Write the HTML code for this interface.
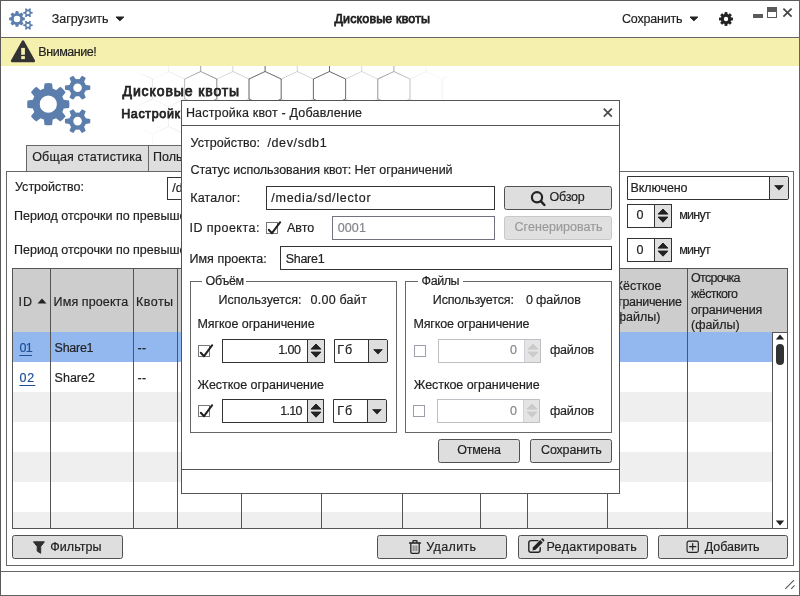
<!DOCTYPE html>
<html lang="ru"><head><meta charset="utf-8"><title>Дисковые квоты</title>
<style>
html,body{margin:0;padding:0;background:#fff}
body{width:800px;height:596px;overflow:hidden;position:relative;font:12.5px/16px "Liberation Sans",sans-serif;color:#222}
#win{position:absolute;left:0;top:0;width:800px;height:596px;will-change:transform}
#frame{left:0;top:0;width:800px;height:596px;box-sizing:border-box;border:1px solid #5a5a5a;border-bottom-color:#626262;border-right-color:#626262}
.abs,.t,#win div,#win svg{position:absolute}
.t{white-space:pre;-webkit-text-stroke:0.18px}
#titlebar{left:0;top:0;width:800px;height:37px;border-bottom:1px solid #666}
#warn{left:1px;top:38px;width:798px;height:28px;background:#f5f0ae}
.tab{background:#dedede;border:1px solid #666;box-sizing:border-box}
.panel{background:#fff;border:1px solid #666;box-sizing:border-box}
.inp{background:#fff;border:1px solid #333;box-sizing:border-box}
.inp.lt{border-color:#72727e}
.combo{border-radius:0 2px 2px 0}
.combo i{right:0;top:0;bottom:0;width:18px;background:#dedede;border-left:1px solid #333;border-radius:0 2px 2px 0;position:absolute}
.spin i{top:0;bottom:0;right:0;background:#dedede;border-left:1px solid #333;position:absolute}
.spin.dis{border-color:#bfbfc6}
.spin.dis i{border-left-color:#d0d0d8;background:#e4e4e4}
.btn{background:#dedede;border:1px solid #505050;border-radius:2.5px;box-sizing:border-box}
.btn.dis{border-color:#c8c8c8;background:#e0e0e0}
.tbl{border:1px solid #555;box-sizing:border-box;background:#fff}
.fs{border:1px solid #666;box-sizing:border-box}
#dlg{left:181px;top:100px;width:439px;height:394px;box-sizing:border-box;border:1px solid #555;background:#fff}
</style></head>
<body><div id="win">
<div id="titlebar">
<svg class="abs" style="left:9px;top:8px" width="24.0" height="22.1" viewBox="0 0 64 59"><path fill="#5b7eac" fill-rule="evenodd" d="M25.72 44.58L25.08 49.96A21.10 21.10 0 0 1 17.52 49.96L16.88 44.58A16.00 16.00 0 0 1 13.55 43.20L9.29 46.55A21.10 21.10 0 0 1 3.95 41.21L7.30 36.95A16.00 16.00 0 0 1 5.92 33.62L0.54 32.98A21.10 21.10 0 0 1 0.54 25.42L5.92 24.78A16.00 16.00 0 0 1 7.30 21.45L3.95 17.19A21.10 21.10 0 0 1 9.29 11.85L13.55 15.20A16.00 16.00 0 0 1 16.88 13.82L17.52 8.44A21.10 21.10 0 0 1 25.08 8.44L25.72 13.82A16.00 16.00 0 0 1 29.05 15.20L33.31 11.85A21.10 21.10 0 0 1 38.65 17.19L35.30 21.45A16.00 16.00 0 0 1 36.68 24.78L42.06 25.42A21.10 21.10 0 0 1 42.06 32.98L36.68 33.62A16.00 16.00 0 0 1 35.30 36.95L38.65 41.21A21.10 21.10 0 0 1 33.31 46.55L29.05 43.20A16.00 16.00 0 0 1 25.72 44.58ZM29.90 29.20A8.60 8.60 0 1 0 12.70 29.20A8.60 8.60 0 1 0 29.90 29.20ZM58.74 9.91L63.12 10.55A12.70 12.70 0 0 1 63.12 14.85L58.74 15.49A8.60 8.60 0 0 1 57.08 18.35L58.72 22.47A12.70 12.70 0 0 1 55.00 24.61L52.25 21.14A8.60 8.60 0 0 1 48.95 21.14L46.20 24.61A12.70 12.70 0 0 1 42.48 22.47L44.12 18.35A8.60 8.60 0 0 1 42.46 15.49L38.08 14.85A12.70 12.70 0 0 1 38.08 10.55L42.46 9.91A8.60 8.60 0 0 1 44.12 7.05L42.48 2.93A12.70 12.70 0 0 1 46.20 0.79L48.95 4.26A8.60 8.60 0 0 1 52.25 4.26L55.00 0.79A12.70 12.70 0 0 1 58.72 2.93L57.08 7.05A8.60 8.60 0 0 1 58.74 9.91ZM54.90 12.70A4.30 4.30 0 1 0 46.30 12.70A4.30 4.30 0 1 0 54.90 12.70ZM58.74 43.31L63.12 43.95A12.70 12.70 0 0 1 63.12 48.25L58.74 48.89A8.60 8.60 0 0 1 57.08 51.75L58.72 55.87A12.70 12.70 0 0 1 55.00 58.01L52.25 54.54A8.60 8.60 0 0 1 48.95 54.54L46.20 58.01A12.70 12.70 0 0 1 42.48 55.87L44.12 51.75A8.60 8.60 0 0 1 42.46 48.89L38.08 48.25A12.70 12.70 0 0 1 38.08 43.95L42.46 43.31A8.60 8.60 0 0 1 44.12 40.45L42.48 36.33A12.70 12.70 0 0 1 46.20 34.19L48.95 37.66A8.60 8.60 0 0 1 52.25 37.66L55.00 34.19A12.70 12.70 0 0 1 58.72 36.33L57.08 40.45A8.60 8.60 0 0 1 58.74 43.31ZM54.90 46.10A4.30 4.30 0 1 0 46.30 46.10A4.30 4.30 0 1 0 54.90 46.10Z"/></svg>
<span class="t" style="left:51.80px;top:11.00px;letter-spacing:-0.045px;">Загрузить</span>
<svg class="abs" style="left:114.5px;top:15.6px" width="10" height="6" viewBox="0 0 10 6"><path d="M1 1H8.8L4.9 4.8Z" fill="#222" stroke="#222" stroke-width="1" stroke-linejoin="round"/></svg>
<span class="t" style="left:334.50px;top:11.00px;letter-spacing:0.140px;-webkit-text-stroke:0.75px;">Дисковые квоты</span>
<span class="t" style="left:622.00px;top:11.00px;letter-spacing:-0.200px;">Сохранить</span>
<svg class="abs" style="left:689px;top:15.6px" width="10" height="6" viewBox="0 0 10 6"><path d="M1 1H8.8L4.9 4.8Z" fill="#222" stroke="#222" stroke-width="1" stroke-linejoin="round"/></svg>
<svg class="abs" style="left:718.9px;top:11.9px" width="14" height="14" viewBox="0 0 14 14"><path fill="#222" fill-rule="evenodd" d="M8.54 11.97L8.39 13.86A7.00 7.00 0 0 1 5.61 13.86L5.46 11.97A5.20 5.20 0 0 1 4.57 11.60L3.13 12.83A7.00 7.00 0 0 1 1.17 10.87L2.40 9.43A5.20 5.20 0 0 1 2.03 8.54L0.14 8.39A7.00 7.00 0 0 1 0.14 5.61L2.03 5.46A5.20 5.20 0 0 1 2.40 4.57L1.17 3.13A7.00 7.00 0 0 1 3.13 1.17L4.57 2.40A5.20 5.20 0 0 1 5.46 2.03L5.61 0.14A7.00 7.00 0 0 1 8.39 0.14L8.54 2.03A5.20 5.20 0 0 1 9.43 2.40L10.87 1.17A7.00 7.00 0 0 1 12.83 3.13L11.60 4.57A5.20 5.20 0 0 1 11.97 5.46L13.86 5.61A7.00 7.00 0 0 1 13.86 8.39L11.97 8.54A5.20 5.20 0 0 1 11.60 9.43L12.83 10.87A7.00 7.00 0 0 1 10.87 12.83L9.43 11.60A5.20 5.20 0 0 1 8.54 11.97ZM9.20 7.00A2.20 2.20 0 1 0 4.80 7.00A2.20 2.20 0 1 0 9.20 7.00Z"/></svg>
<div class="abs" style="left:753px;top:14px;width:10px;height:4px;background:#5a5a5a"></div>
<div class="abs" style="left:767px;top:7px;width:10px;height:11px;border:1px solid #5a5a5a;border-top-width:5px;box-sizing:border-box"></div>
<svg class="abs" style="left:782px;top:7px" width="11" height="11" viewBox="0 0 11 11"><path d="M1.4 1.6L9.6 9.6M9.6 1.6L1.4 9.6" stroke="#444" stroke-width="1.7" fill="none"/></svg>
</div>
<div id="warn">
<svg class="abs" style="left:9px;top:1px" width="26" height="24" viewBox="0 0 26 24"><path d="M13 2.6L23.8 22H2.2Z" fill="#333" stroke="#333" stroke-width="2.6" stroke-linejoin="round"/><rect x="11.2" y="8.9" width="3.7" height="6.9" fill="#f5f0ae"/><rect x="11.2" y="17.1" width="3.7" height="3" fill="#f5f0ae"/></svg>
</div>
<span class="t" style="left:38.30px;top:44.00px;letter-spacing:-0.451px;">Внимание!</span>
<svg class="abs" style="left:0;top:66px" width="800" height="80" viewBox="0 66 800 80"><defs><linearGradient id="hg" x1="0" x2="1" y1="0" y2="0"><stop offset="0.17" stop-color="#fff" stop-opacity="0"/><stop offset="0.3" stop-color="#fff" stop-opacity="1"/><stop offset="0.43" stop-color="#fff" stop-opacity="1"/><stop offset="0.565" stop-color="#fff" stop-opacity="0"/></linearGradient><mask id="hm"><rect x="0" y="66" width="800" height="80" fill="url(#hg)"/></mask></defs><g mask="url(#hm)" fill="none"><path d="M-24.7 51.5L-8.6 44.0L7.5 51.5L7.5 71.5M7.5 51.5L23.6 44.0L39.7 51.5L39.7 71.5M39.7 51.5L55.8 44.0L71.9 51.5L71.9 71.5M71.9 51.5L88.0 44.0L104.1 51.5L104.1 71.5M104.1 51.5L120.2 44.0L136.3 51.5L136.3 71.5M136.3 51.5L152.4 44.0L168.5 51.5L168.5 71.5M168.5 51.5L184.6 44.0L200.7 51.5L200.7 71.5M200.7 51.5L216.8 44.0L232.9 51.5L232.9 71.5M232.9 51.5L249.0 44.0L265.1 51.5L265.1 71.5M265.1 51.5L281.2 44.0L297.3 51.5L297.3 71.5M297.3 51.5L313.4 44.0L329.5 51.5L329.5 71.5M329.5 51.5L345.6 44.0L361.7 51.5L361.7 71.5M361.7 51.5L377.8 44.0L393.9 51.5L393.9 71.5M393.9 51.5L410.0 44.0L426.1 51.5L426.1 71.5M426.1 51.5L442.2 44.0L458.3 51.5L458.3 71.5M458.3 51.5L474.4 44.0L490.5 51.5L490.5 71.5M490.5 51.5L506.6 44.0L522.7 51.5L522.7 71.5M522.7 51.5L538.8 44.0L554.9 51.5L554.9 71.5M554.9 51.5L571.0 44.0L587.1 51.5L587.1 71.5M587.1 51.5L603.2 44.0L619.3 51.5L619.3 71.5M619.3 51.5L635.4 44.0L651.5 51.5L651.5 71.5M651.5 51.5L667.6 44.0L683.7 51.5L683.7 71.5M683.7 51.5L699.8 44.0L715.9 51.5L715.9 71.5M715.9 51.5L732.0 44.0L748.1 51.5L748.1 71.5M748.1 51.5L764.2 44.0L780.3 51.5L780.3 71.5M780.3 51.5L796.4 44.0L812.5 51.5L812.5 71.5M812.5 51.5L828.6 44.0L844.7 51.5L844.7 71.5M844.7 51.5L860.8 44.0L876.9 51.5L876.9 71.5M-40.8 79.0L-24.7 71.5L-8.6 79.0L-8.6 99.0M-8.6 79.0L7.5 71.5L23.6 79.0L23.6 99.0M23.6 79.0L39.7 71.5L55.8 79.0L55.8 99.0M55.8 79.0L71.9 71.5L88.0 79.0L88.0 99.0M88.0 79.0L104.1 71.5L120.2 79.0L120.2 99.0M120.2 79.0L136.3 71.5L152.4 79.0L152.4 99.0M152.4 79.0L168.5 71.5L184.6 79.0L184.6 99.0M184.6 79.0L200.7 71.5L216.8 79.0L216.8 99.0M216.8 79.0L232.9 71.5L249.0 79.0L249.0 99.0M249.0 79.0L265.1 71.5L281.2 79.0L281.2 99.0M281.2 79.0L297.3 71.5L313.4 79.0L313.4 99.0M313.4 79.0L329.5 71.5L345.6 79.0L345.6 99.0M345.6 79.0L361.7 71.5L377.8 79.0L377.8 99.0M377.8 79.0L393.9 71.5L410.0 79.0L410.0 99.0M410.0 79.0L426.1 71.5L442.2 79.0L442.2 99.0M442.2 79.0L458.3 71.5L474.4 79.0L474.4 99.0M474.4 79.0L490.5 71.5L506.6 79.0L506.6 99.0M506.6 79.0L522.7 71.5L538.8 79.0L538.8 99.0M538.8 79.0L554.9 71.5L571.0 79.0L571.0 99.0M571.0 79.0L587.1 71.5L603.2 79.0L603.2 99.0M603.2 79.0L619.3 71.5L635.4 79.0L635.4 99.0M635.4 79.0L651.5 71.5L667.6 79.0L667.6 99.0M667.6 79.0L683.7 71.5L699.8 79.0L699.8 99.0M699.8 79.0L715.9 71.5L732.0 79.0L732.0 99.0M732.0 79.0L748.1 71.5L764.2 79.0L764.2 99.0M764.2 79.0L780.3 71.5L796.4 79.0L796.4 99.0M796.4 79.0L812.5 71.5L828.6 79.0L828.6 99.0M828.6 79.0L844.7 71.5L860.8 79.0L860.8 99.0M-24.7 106.5L-8.6 99.0L7.5 106.5L7.5 126.5M7.5 106.5L23.6 99.0L39.7 106.5L39.7 126.5M39.7 106.5L55.8 99.0L71.9 106.5L71.9 126.5M71.9 106.5L88.0 99.0L104.1 106.5L104.1 126.5M104.1 106.5L120.2 99.0L136.3 106.5L136.3 126.5M136.3 106.5L152.4 99.0L168.5 106.5L168.5 126.5M168.5 106.5L184.6 99.0L200.7 106.5L200.7 126.5M200.7 106.5L216.8 99.0L232.9 106.5L232.9 126.5M232.9 106.5L249.0 99.0L265.1 106.5L265.1 126.5M265.1 106.5L281.2 99.0L297.3 106.5L297.3 126.5M297.3 106.5L313.4 99.0L329.5 106.5L329.5 126.5M329.5 106.5L345.6 99.0L361.7 106.5L361.7 126.5M361.7 106.5L377.8 99.0L393.9 106.5L393.9 126.5M393.9 106.5L410.0 99.0L426.1 106.5L426.1 126.5M426.1 106.5L442.2 99.0L458.3 106.5L458.3 126.5M458.3 106.5L474.4 99.0L490.5 106.5L490.5 126.5M490.5 106.5L506.6 99.0L522.7 106.5L522.7 126.5M522.7 106.5L538.8 99.0L554.9 106.5L554.9 126.5M554.9 106.5L571.0 99.0L587.1 106.5L587.1 126.5M587.1 106.5L603.2 99.0L619.3 106.5L619.3 126.5M619.3 106.5L635.4 99.0L651.5 106.5L651.5 126.5M651.5 106.5L667.6 99.0L683.7 106.5L683.7 126.5M683.7 106.5L699.8 99.0L715.9 106.5L715.9 126.5M715.9 106.5L732.0 99.0L748.1 106.5L748.1 126.5M748.1 106.5L764.2 99.0L780.3 106.5L780.3 126.5M780.3 106.5L796.4 99.0L812.5 106.5L812.5 126.5M812.5 106.5L828.6 99.0L844.7 106.5L844.7 126.5M844.7 106.5L860.8 99.0L876.9 106.5L876.9 126.5M-40.8 134.0L-24.7 126.5L-8.6 134.0L-8.6 154.0M-8.6 134.0L7.5 126.5L23.6 134.0L23.6 154.0M23.6 134.0L39.7 126.5L55.8 134.0L55.8 154.0M55.8 134.0L71.9 126.5L88.0 134.0L88.0 154.0M88.0 134.0L104.1 126.5L120.2 134.0L120.2 154.0M120.2 134.0L136.3 126.5L152.4 134.0L152.4 154.0M152.4 134.0L168.5 126.5L184.6 134.0L184.6 154.0M184.6 134.0L200.7 126.5L216.8 134.0L216.8 154.0M216.8 134.0L232.9 126.5L249.0 134.0L249.0 154.0M249.0 134.0L265.1 126.5L281.2 134.0L281.2 154.0M281.2 134.0L297.3 126.5L313.4 134.0L313.4 154.0M313.4 134.0L329.5 126.5L345.6 134.0L345.6 154.0M345.6 134.0L361.7 126.5L377.8 134.0L377.8 154.0M377.8 134.0L393.9 126.5L410.0 134.0L410.0 154.0M410.0 134.0L426.1 126.5L442.2 134.0L442.2 154.0M442.2 134.0L458.3 126.5L474.4 134.0L474.4 154.0M474.4 134.0L490.5 126.5L506.6 134.0L506.6 154.0M506.6 134.0L522.7 126.5L538.8 134.0L538.8 154.0M538.8 134.0L554.9 126.5L571.0 134.0L571.0 154.0M571.0 134.0L587.1 126.5L603.2 134.0L603.2 154.0M603.2 134.0L619.3 126.5L635.4 134.0L635.4 154.0M635.4 134.0L651.5 126.5L667.6 134.0L667.6 154.0M667.6 134.0L683.7 126.5L699.8 134.0L699.8 154.0M699.8 134.0L715.9 126.5L732.0 134.0L732.0 154.0M732.0 134.0L748.1 126.5L764.2 134.0L764.2 154.0M764.2 134.0L780.3 126.5L796.4 134.0L796.4 154.0M796.4 134.0L812.5 126.5L828.6 134.0L828.6 154.0M828.6 134.0L844.7 126.5L860.8 134.0L860.8 154.0" stroke="#555" stroke-width="0.6" opacity="0.45"/><path d="M7.5 51.5V71.5M7.5 71.5L23.6 79.0L23.6 99.0L7.5 106.5L-8.6 99.0L-8.6 79.0ZM71.9 51.5V71.5M71.9 71.5L88.0 79.0L88.0 99.0L71.9 106.5L55.8 99.0L55.8 79.0ZM136.3 51.5V71.5M136.3 71.5L152.4 79.0L152.4 99.0L136.3 106.5L120.2 99.0L120.2 79.0ZM200.7 51.5V71.5M200.7 71.5L216.8 79.0L216.8 99.0L200.7 106.5L184.6 99.0L184.6 79.0ZM265.1 51.5V71.5M265.1 71.5L281.2 79.0L281.2 99.0L265.1 106.5L249.0 99.0L249.0 79.0ZM329.5 51.5V71.5M329.5 71.5L345.6 79.0L345.6 99.0L329.5 106.5L313.4 99.0L313.4 79.0ZM393.9 51.5V71.5M393.9 71.5L410.0 79.0L410.0 99.0L393.9 106.5L377.8 99.0L377.8 79.0ZM458.3 51.5V71.5M458.3 71.5L474.4 79.0L474.4 99.0L458.3 106.5L442.2 99.0L442.2 79.0ZM522.7 51.5V71.5M522.7 71.5L538.8 79.0L538.8 99.0L522.7 106.5L506.6 99.0L506.6 79.0ZM587.1 51.5V71.5M587.1 71.5L603.2 79.0L603.2 99.0L587.1 106.5L571.0 99.0L571.0 79.0ZM651.5 51.5V71.5M651.5 71.5L667.6 79.0L667.6 99.0L651.5 106.5L635.4 99.0L635.4 79.0ZM715.9 51.5V71.5M715.9 71.5L732.0 79.0L732.0 99.0L715.9 106.5L699.8 99.0L699.8 79.0ZM780.3 51.5V71.5M780.3 71.5L796.4 79.0L796.4 99.0L780.3 106.5L764.2 99.0L764.2 79.0ZM844.7 51.5V71.5M844.7 71.5L860.8 79.0L860.8 99.0L844.7 106.5L828.6 99.0L828.6 79.0Z" stroke="#222" stroke-width="0.7" opacity="0.8"/></g></svg>
<svg class="abs" style="left:27px;top:75px" width="64.0" height="59.0" viewBox="0 0 64 59"><path fill="#5b7eac" fill-rule="evenodd" d="M25.72 44.58L25.08 49.96A21.10 21.10 0 0 1 17.52 49.96L16.88 44.58A16.00 16.00 0 0 1 13.55 43.20L9.29 46.55A21.10 21.10 0 0 1 3.95 41.21L7.30 36.95A16.00 16.00 0 0 1 5.92 33.62L0.54 32.98A21.10 21.10 0 0 1 0.54 25.42L5.92 24.78A16.00 16.00 0 0 1 7.30 21.45L3.95 17.19A21.10 21.10 0 0 1 9.29 11.85L13.55 15.20A16.00 16.00 0 0 1 16.88 13.82L17.52 8.44A21.10 21.10 0 0 1 25.08 8.44L25.72 13.82A16.00 16.00 0 0 1 29.05 15.20L33.31 11.85A21.10 21.10 0 0 1 38.65 17.19L35.30 21.45A16.00 16.00 0 0 1 36.68 24.78L42.06 25.42A21.10 21.10 0 0 1 42.06 32.98L36.68 33.62A16.00 16.00 0 0 1 35.30 36.95L38.65 41.21A21.10 21.10 0 0 1 33.31 46.55L29.05 43.20A16.00 16.00 0 0 1 25.72 44.58ZM29.90 29.20A8.60 8.60 0 1 0 12.70 29.20A8.60 8.60 0 1 0 29.90 29.20ZM58.74 9.91L63.12 10.55A12.70 12.70 0 0 1 63.12 14.85L58.74 15.49A8.60 8.60 0 0 1 57.08 18.35L58.72 22.47A12.70 12.70 0 0 1 55.00 24.61L52.25 21.14A8.60 8.60 0 0 1 48.95 21.14L46.20 24.61A12.70 12.70 0 0 1 42.48 22.47L44.12 18.35A8.60 8.60 0 0 1 42.46 15.49L38.08 14.85A12.70 12.70 0 0 1 38.08 10.55L42.46 9.91A8.60 8.60 0 0 1 44.12 7.05L42.48 2.93A12.70 12.70 0 0 1 46.20 0.79L48.95 4.26A8.60 8.60 0 0 1 52.25 4.26L55.00 0.79A12.70 12.70 0 0 1 58.72 2.93L57.08 7.05A8.60 8.60 0 0 1 58.74 9.91ZM54.90 12.70A4.30 4.30 0 1 0 46.30 12.70A4.30 4.30 0 1 0 54.90 12.70ZM58.74 43.31L63.12 43.95A12.70 12.70 0 0 1 63.12 48.25L58.74 48.89A8.60 8.60 0 0 1 57.08 51.75L58.72 55.87A12.70 12.70 0 0 1 55.00 58.01L52.25 54.54A8.60 8.60 0 0 1 48.95 54.54L46.20 58.01A12.70 12.70 0 0 1 42.48 55.87L44.12 51.75A8.60 8.60 0 0 1 42.46 48.89L38.08 48.25A12.70 12.70 0 0 1 38.08 43.95L42.46 43.31A8.60 8.60 0 0 1 44.12 40.45L42.48 36.33A12.70 12.70 0 0 1 46.20 34.19L48.95 37.66A8.60 8.60 0 0 1 52.25 37.66L55.00 34.19A12.70 12.70 0 0 1 58.72 36.33L57.08 40.45A8.60 8.60 0 0 1 58.74 43.31ZM54.90 46.10A4.30 4.30 0 1 0 46.30 46.10A4.30 4.30 0 1 0 54.90 46.10Z"/></svg>
<span class="t" style="left:122.50px;top:81.00px;letter-spacing:0.904px;font-size:14px;line-height:20px;-webkit-text-stroke:0.75px;">Дисковые квоты</span>
<span class="t" style="left:121.20px;top:106.00px;letter-spacing:0.651px;-webkit-text-stroke:0.75px;">Настройка квот проектов</span>
<div class="abs tab" style="left:26px;top:145px;width:123px;height:27px;"></div>
<div class="abs tab" style="left:148px;top:145px;width:114px;height:27px;"></div>
<span class="t" style="left:32.20px;top:149.00px;letter-spacing:0.175px;">Общая статистика</span>
<span class="t" style="left:153.00px;top:149.00px;">Пользователи</span>
<div class="abs panel" style="left:6px;top:171px;width:788px;height:395px;"></div>
<span class="t" style="left:15.00px;top:179.00px;letter-spacing:0.011px;">Устройство:</span>
<div class="abs inp" style="left:167px;top:177px;width:163px;height:23px;"></div>
<span class="t" style="left:172.30px;top:180.00px;">/dev/sdb1</span>
<span class="t" style="left:14.00px;top:208.00px;">Период отсрочки по превышению мягкого ограничения (объём):</span>
<span class="t" style="left:14.00px;top:242.00px;">Период отсрочки по превышению мягкого ограничения (файлы):</span>
<div class="abs inp combo" style="left:627px;top:176px;width:162px;height:24px;"><i></i></div>
<span class="t" style="left:630.60px;top:180.00px;letter-spacing:-0.101px;">Включено</span>
<svg class="abs" style="left:774px;top:185px" width="10" height="6" viewBox="0 0 10 6"><path d="M0.7 0.6H9.3L5 5.1Z" fill="#222" stroke="#222" stroke-width="0.8" stroke-linejoin="round"/></svg>
<div class="abs inp spin" style="left:627px;top:204px;width:45px;height:24px;"><i style="left:26px"></i></div><svg class="abs" style="left:657.1px;top:208.4px" width="12" height="16" viewBox="0 0 12 16"><path d="M1.1 6.1L6 1L10.9 6.1ZM1.1 9.1L6 14.2L10.9 9.1Z" fill="#222" stroke="#222" stroke-width="1" stroke-linejoin="round"/></svg>
<span class="t" style="left:636.50px;top:207.00px;">0</span>
<span class="t" style="left:679.20px;top:207.00px;letter-spacing:-0.700px;">минут</span>
<div class="abs inp spin" style="left:627px;top:238px;width:45px;height:24px;"><i style="left:26px"></i></div><svg class="abs" style="left:657.1px;top:242.4px" width="12" height="16" viewBox="0 0 12 16"><path d="M1.1 6.1L6 1L10.9 6.1ZM1.1 9.1L6 14.2L10.9 9.1Z" fill="#222" stroke="#222" stroke-width="1" stroke-linejoin="round"/></svg>
<span class="t" style="left:636.50px;top:242.00px;">0</span>
<span class="t" style="left:679.20px;top:242.00px;letter-spacing:-0.700px;">минут</span>
<div class="abs tbl" style="left:12px;top:268px;width:776px;height:261px;"></div>
<div class="abs" style="left:13px;top:269px;width:774px;height:63px;background:#cdcdcd"></div>
<div class="abs" style="left:13px;top:332px;width:759px;height:30px;background:#93b8f0"></div>
<div class="abs" style="left:13px;top:392px;width:759px;height:30px;background:#efefef"></div>
<div class="abs" style="left:13px;top:452px;width:759px;height:30px;background:#efefef"></div>
<div class="abs" style="left:13px;top:512px;width:759px;height:16px;background:#efefef"></div>
<div class="abs" style="left:50px;top:268px;width:1px;height:261px;background:#555"></div>
<div class="abs" style="left:133px;top:268px;width:1px;height:261px;background:#555"></div>
<div class="abs" style="left:177px;top:268px;width:1px;height:261px;background:#555"></div>
<div class="abs" style="left:241px;top:268px;width:1px;height:261px;background:#555"></div>
<div class="abs" style="left:321px;top:268px;width:1px;height:261px;background:#555"></div>
<div class="abs" style="left:402px;top:268px;width:1px;height:261px;background:#555"></div>
<div class="abs" style="left:480px;top:268px;width:1px;height:261px;background:#555"></div>
<div class="abs" style="left:527px;top:268px;width:1px;height:261px;background:#555"></div>
<div class="abs" style="left:607px;top:268px;width:1px;height:261px;background:#555"></div>
<div class="abs" style="left:687px;top:268px;width:1px;height:261px;background:#555"></div>
<div class="abs" style="left:772px;top:332px;width:16px;height:197px;border:1px solid #555;background:#fff;box-sizing:border-box"></div>
<svg class="abs" style="left:775px;top:334px" width="10" height="6" viewBox="0 0 10 6"><path d="M0.8 5.4H9.2L5 0.6Z" fill="#222"/></svg>
<svg class="abs" style="left:775px;top:520.3px" width="10" height="6" viewBox="0 0 10 6"><path d="M0.8 0.6H9.2L5 5.4Z" fill="#222"/></svg>
<div class="abs" style="left:776px;top:344px;width:8px;height:21px;background:#333;border-radius:4px"></div>
<span class="t" style="left:18.60px;top:294.00px;letter-spacing:1.000px;">ID</span>
<svg class="abs" style="left:37px;top:298px" width="10" height="6" viewBox="0 0 10 6"><path d="M0.5 5.5H9.5L5 0.5Z" fill="#222"/></svg>
<span class="t" style="left:53.60px;top:294.00px;letter-spacing:0.106px;">Имя проекта</span>
<span class="t" style="left:136.10px;top:294.00px;letter-spacing:0.454px;">Квоты</span>
<span class="t" style="left:181.00px;top:278.00px;">Мягкое</span>
<span class="t" style="left:611.50px;top:278.00px;">Жёсткое</span>
<span class="t" style="left:611.50px;top:294.00px;letter-spacing:-0.315px;">ограничение</span>
<span class="t" style="left:611.50px;top:309.00px;">(файлы)</span>
<span class="t" style="left:691.00px;top:270.00px;letter-spacing:-0.700px;">Отсрочка</span>
<span class="t" style="left:691.00px;top:286.00px;letter-spacing:-0.591px;">жёсткого</span>
<span class="t" style="left:691.00px;top:302.00px;letter-spacing:-0.215px;">ограничения</span>
<span class="t" style="left:691.00px;top:317.00px;letter-spacing:-0.027px;">(файлы)</span>
<span class="t" style="left:19.40px;top:340.00px;letter-spacing:-0.700px;color:#1c4f94;text-decoration:underline;text-underline-offset:2.5px;text-decoration-thickness:1.2px">01</span>
<span class="t" style="left:54.60px;top:340.00px;letter-spacing:-0.271px;">Share1</span>
<span class="t" style="left:137.60px;top:340.00px;letter-spacing:0.237px;">--</span>
<span class="t" style="left:19.40px;top:370.00px;letter-spacing:1.000px;color:#1c4f94;text-decoration:underline;text-underline-offset:2.5px;text-decoration-thickness:1.2px">02</span>
<span class="t" style="left:54.60px;top:370.00px;letter-spacing:0.009px;">Share2</span>
<span class="t" style="left:137.60px;top:370.00px;letter-spacing:0.237px;">--</span>
<div class="abs btn" style="left:12px;top:535px;width:111px;height:24px;"></div>
<svg class="abs" style="left:32px;top:541px" width="15" height="14" viewBox="0 0 15 14"><path d="M1.5 0.8H12.4L8.7 5.6V12.3L5.2 10.1V5.6Z" fill="#303030" stroke="#303030" stroke-width="1" stroke-linejoin="round"/></svg>
<span class="t" style="left:50.30px;top:539.00px;letter-spacing:0.018px;">Фильтры</span>
<div class="abs btn" style="left:377px;top:535px;width:130px;height:24px;"></div>
<svg class="abs" style="left:408px;top:539px" width="14" height="16" viewBox="0 0 14 16"><g fill="none" stroke="#222" stroke-width="1.3" stroke-linecap="round" stroke-linejoin="round"><path d="M1.5 4H12.5M5 4V2.2Q5 1.6 5.6 1.6H8.4Q9 1.6 9 2.2V4M2.8 4.2V13Q2.8 14.4 4.2 14.4H9.8Q11.2 14.4 11.2 13V4.2"/><path d="M5.2 6.8V11.8M7 6.8V11.8M8.8 6.8V11.8" stroke-width="0.8" stroke="#555"/></g></svg>
<span class="t" style="left:426.30px;top:539.00px;letter-spacing:0.332px;">Удалить</span>
<div class="abs btn" style="left:518px;top:535px;width:130px;height:24px;"></div>
<svg class="abs" style="left:527px;top:538.2px" width="18" height="16" viewBox="0 0 18 16"><g fill="none" stroke="#222" stroke-width="1.4" stroke-linecap="round" stroke-linejoin="round"><path d="M11 2.6H4Q1.8 2.6 1.8 4.8V12Q1.8 14.2 4 14.2H11Q13.2 14.2 13.2 12V9.6"/></g><path d="M6 9.2L13.2 2L15.8 4.6L8.6 11.8L5.4 12.4Z" fill="#222"/><path d="M14 1.2L14.8 0.4Q15.4 0 16 0.6L17.2 1.8Q17.6 2.4 17.2 3L16.6 3.8Z" fill="#222"/></svg>
<span class="t" style="left:546.50px;top:539.00px;letter-spacing:0.331px;">Редактировать</span>
<div class="abs btn" style="left:658px;top:535px;width:130px;height:24px;"></div>
<svg class="abs" style="left:686.3px;top:539.9px" width="13.4" height="13.4" viewBox="0 0 15 15"><g fill="none" stroke="#222" stroke-width="1.3" stroke-linecap="round"><rect x="1.2" y="1.2" width="12.6" height="12.6" rx="2"/><path d="M7.5 4V11M4 7.5H11"/></g></svg>
<span class="t" style="left:704.80px;top:539.00px;letter-spacing:-0.061px;">Добавить</span>
<div class="abs" style="left:1px;top:571px;width:798px;height:1px;background:#666"></div>
<svg class="abs" style="left:783px;top:578px" width="13" height="13" viewBox="0 0 13 13"><path d="M2.3 10.8L11 2.1M8.2 10.8L11.6 7.4" stroke="#555" stroke-width="1.1" fill="none"/></svg>
<div id="dlg">
</div>
<div class="abs" style="left:182px;top:125px;width:437px;height:1px;background:#555"></div>
<div class="abs" style="left:182px;top:469px;width:437px;height:1px;background:#555"></div>
<span class="t" style="left:185.90px;top:105.00px;letter-spacing:0.186px;">Настройка квот - Добавление</span>
<svg class="abs" style="left:601.8px;top:107px" width="12" height="12" viewBox="0 0 12 12"><path d="M1.8 1.6L9.8 9.6M9.8 1.6L1.8 9.6" stroke="#4a4a4a" stroke-width="1.7" fill="none"/></svg>
<span class="t" style="left:190.50px;top:135.00px;letter-spacing:0.061px;">Устройство:</span>
<span class="t" style="left:267.40px;top:135.00px;letter-spacing:0.631px;">/dev/sdb1</span>
<span class="t" style="left:190.50px;top:162.00px;letter-spacing:-0.030px;">Статус использования квот: Нет ограничений</span>
<span class="t" style="left:190.20px;top:190.00px;letter-spacing:0.166px;">Каталог:</span>
<div class="abs inp" style="left:266px;top:186px;width:229px;height:24px;"></div>
<span class="t" style="left:271.30px;top:190.00px;letter-spacing:0.735px;">/media/sd/lector</span>
<div class="abs btn" style="left:504px;top:186px;width:108px;height:24px;"></div>
<svg class="abs" style="left:529px;top:190px" width="17" height="17" viewBox="0 0 17 17"><circle cx="8" cy="7.3" r="5.1" fill="none" stroke="#222" stroke-width="2.2"/><path d="M11.8 11.2L15.4 15" stroke="#222" stroke-width="2.4" stroke-linecap="round"/></svg>
<span class="t" style="left:549.50px;top:189.00px;letter-spacing:-0.213px;">Обзор</span>
<span class="t" style="left:189.50px;top:220.00px;letter-spacing:0.466px;">ID проекта:</span>
<div class="abs" style="left:266px;top:222px;width:12px;height:12px;border:1px solid #777;box-sizing:border-box;background:#fff"></div><svg class="abs" style="left:266.3px;top:219.6px" width="17" height="16" viewBox="0 0 17 16"><path d="M2.8 9.8L6 13.2L14.2 2.2" stroke="#222" stroke-width="2" fill="none" stroke-linecap="round" stroke-linejoin="round"/></svg>
<span class="t" style="left:287.10px;top:220.00px;letter-spacing:-0.063px;">Авто</span>
<div class="abs inp lt" style="left:332px;top:216px;width:163px;height:24px;"></div>
<span class="t" style="left:337.70px;top:220.00px;letter-spacing:0.115px;color:#84848b;">0001</span>
<div class="abs btn dis" style="left:504px;top:216px;width:108px;height:24px;"></div>
<span class="t" style="left:514.50px;top:219.00px;letter-spacing:0.053px;color:#9a9a9a;">Сгенерировать</span>
<span class="t" style="left:189.50px;top:251.00px;letter-spacing:0.019px;">Имя проекта:</span>
<div class="abs inp" style="left:280px;top:246px;width:332px;height:24px;"></div>
<span class="t" style="left:285.70px;top:251.00px;letter-spacing:-0.271px;">Share1</span>
<div class="abs fs" style="left:190px;top:281px;width:207px;height:152px;"></div>
<div class="abs" style="left:202px;top:280px;width:44px;height:4px;background:#fff"></div>
<span class="t" style="left:205.50px;top:273.00px;letter-spacing:-0.283px;">Объём</span>
<span class="t" style="left:218.60px;top:292.00px;">Используется:</span>
<span class="t" style="left:310.60px;top:292.00px;letter-spacing:0.224px;">0.00 байт</span>
<span class="t" style="left:197.50px;top:316.00px;letter-spacing:-0.069px;">Мягкое ограничение</span>
<div class="abs" style="left:198px;top:345px;width:12px;height:12px;border:1px solid #777;box-sizing:border-box;background:#fff"></div><svg class="abs" style="left:198.3px;top:342.6px" width="17" height="16" viewBox="0 0 17 16"><path d="M2.8 9.8L6 13.2L14.2 2.2" stroke="#222" stroke-width="2" fill="none" stroke-linecap="round" stroke-linejoin="round"/></svg>
<div class="abs inp spin" style="left:222px;top:339px;width:103px;height:24px;"><i style="left:84px"></i></div><svg class="abs" style="left:310.1px;top:343.4px" width="12" height="16" viewBox="0 0 12 16"><path d="M1.1 6.1L6 1L10.9 6.1ZM1.1 9.1L6 14.2L10.9 9.1Z" fill="#222" stroke="#222" stroke-width="1" stroke-linejoin="round"/></svg>
<span class="t" style="left:278.20px;top:342.00px;letter-spacing:-0.559px;">1.00</span>
<div class="abs inp combo" style="left:334px;top:339px;width:54px;height:24px;"><i></i></div>
<span class="t" style="left:337.30px;top:342.00px;letter-spacing:1.000px;">Гб</span>
<svg class="abs" style="left:373px;top:348.5px" width="10" height="6" viewBox="0 0 10 6"><path d="M0.7 0.6H9.3L5 5.1Z" fill="#222" stroke="#222" stroke-width="0.8" stroke-linejoin="round"/></svg>
<span class="t" style="left:197.60px;top:377.00px;letter-spacing:-0.036px;">Жесткое ограничение</span>
<div class="abs" style="left:198px;top:405px;width:12px;height:12px;border:1px solid #777;box-sizing:border-box;background:#fff"></div><svg class="abs" style="left:198.3px;top:402.6px" width="17" height="16" viewBox="0 0 17 16"><path d="M2.8 9.8L6 13.2L14.2 2.2" stroke="#222" stroke-width="2" fill="none" stroke-linecap="round" stroke-linejoin="round"/></svg>
<div class="abs inp spin" style="left:222px;top:399px;width:102px;height:24px;"><i style="left:84px"></i></div><svg class="abs" style="left:309.6px;top:403.4px" width="12" height="16" viewBox="0 0 12 16"><path d="M1.1 6.1L6 1L10.9 6.1ZM1.1 9.1L6 14.2L10.9 9.1Z" fill="#222" stroke="#222" stroke-width="1" stroke-linejoin="round"/></svg>
<span class="t" style="left:280.20px;top:403.00px;letter-spacing:-0.700px;">1.10</span>
<div class="abs inp combo" style="left:333px;top:399px;width:54px;height:24px;"><i></i></div>
<span class="t" style="left:337.30px;top:403.00px;letter-spacing:1.000px;">Гб</span>
<svg class="abs" style="left:372px;top:408.5px" width="10" height="6" viewBox="0 0 10 6"><path d="M0.7 0.6H9.3L5 5.1Z" fill="#222" stroke="#222" stroke-width="0.8" stroke-linejoin="round"/></svg>
<div class="abs fs" style="left:405px;top:281px;width:207px;height:152px;"></div>
<div class="abs" style="left:418px;top:280px;width:45px;height:4px;background:#fff"></div>
<span class="t" style="left:421.60px;top:273.00px;letter-spacing:-0.458px;">Файлы</span>
<span class="t" style="left:432.80px;top:292.00px;letter-spacing:-0.144px;">Используется:</span>
<span class="t" style="left:525.90px;top:292.00px;letter-spacing:-0.104px;">0 файлов</span>
<span class="t" style="left:413.40px;top:316.00px;letter-spacing:-0.134px;">Мягкое ограничение</span>
<div class="abs" style="left:414px;top:345px;width:12px;height:12px;border:1px solid #9e9eab;box-sizing:border-box;background:#fff"></div>
<div class="abs inp spin dis" style="left:438px;top:339px;width:103px;height:24px;"><i style="left:85px"></i></div><svg class="abs" style="left:526.6px;top:343.4px" width="12" height="16" viewBox="0 0 12 16"><path d="M1.1 6.1L6 1L10.9 6.1ZM1.1 9.1L6 14.2L10.9 9.1Z" fill="#cbcbcb" stroke="#cbcbcb" stroke-width="1" stroke-linejoin="round"/></svg>
<span class="t" style="left:509.90px;top:342.00px;color:#87878c;">0</span>
<span class="t" style="left:550.00px;top:342.00px;letter-spacing:-0.221px;">файлов</span>
<span class="t" style="left:413.80px;top:377.00px;letter-spacing:-0.058px;">Жесткое ограничение</span>
<div class="abs" style="left:413px;top:405px;width:12px;height:12px;border:1px solid #9e9eab;box-sizing:border-box;background:#fff"></div>
<div class="abs inp spin dis" style="left:437px;top:399px;width:103px;height:24px;"><i style="left:85px"></i></div><svg class="abs" style="left:525.6px;top:403.4px" width="12" height="16" viewBox="0 0 12 16"><path d="M1.1 6.1L6 1L10.9 6.1ZM1.1 9.1L6 14.2L10.9 9.1Z" fill="#cbcbcb" stroke="#cbcbcb" stroke-width="1" stroke-linejoin="round"/></svg>
<span class="t" style="left:509.90px;top:403.00px;color:#87878c;">0</span>
<span class="t" style="left:550.00px;top:403.00px;letter-spacing:-0.221px;">файлов</span>
<div class="abs btn" style="left:438px;top:439px;width:82px;height:24px;"></div>
<span class="t" style="left:457.30px;top:442.00px;letter-spacing:-0.239px;">Отмена</span>
<div class="abs btn" style="left:530px;top:439px;width:82px;height:24px;"></div>
<span class="t" style="left:541.10px;top:442.00px;letter-spacing:-0.188px;">Сохранить</span>
<div id="frame"></div>
</div></body></html>
